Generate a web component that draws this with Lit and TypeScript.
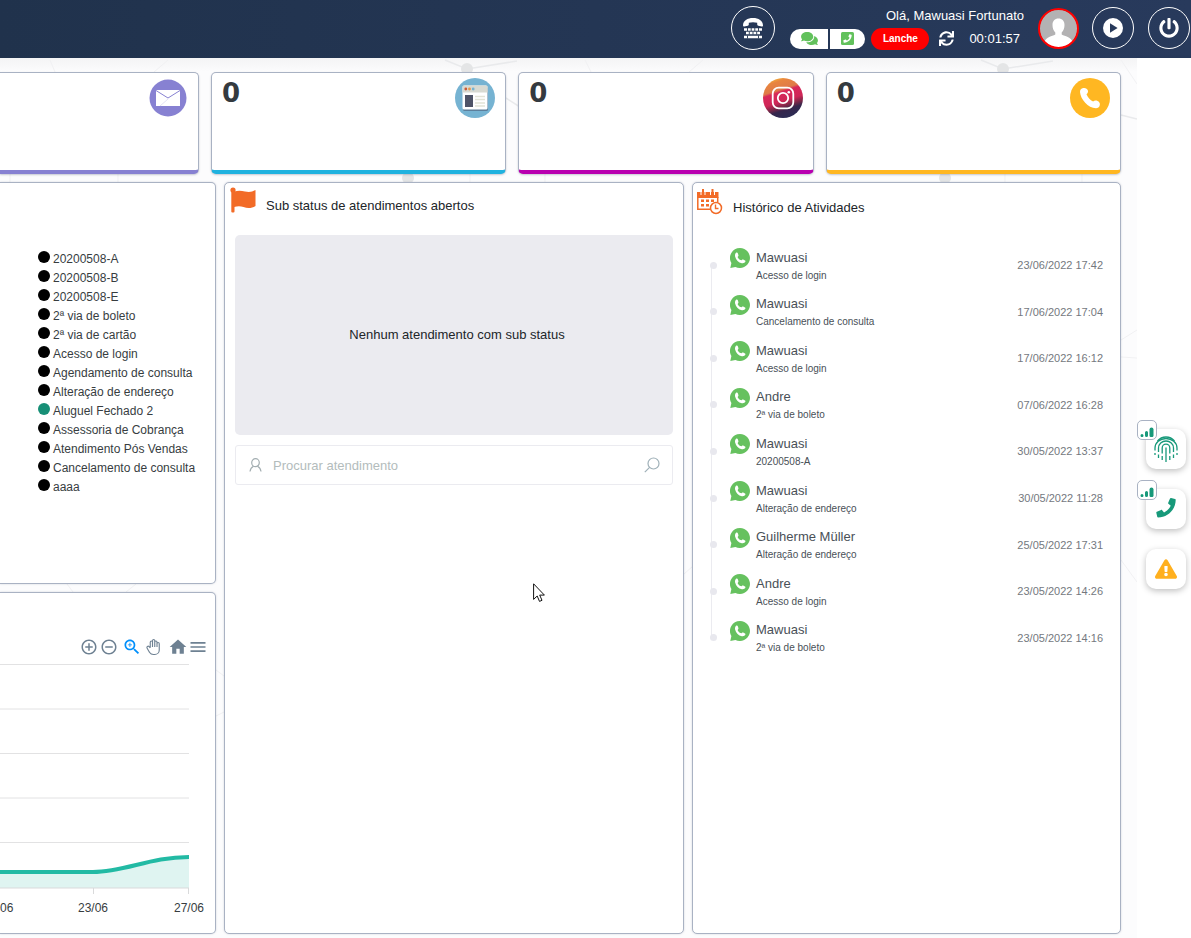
import { LitElement, html, css, svg } from "lit";
import { customElement } from "lit/decorators.js";
import { classMap } from "lit/directives/class-map.js";

const PHONE =
  "M493.4 24.6l-104-24c-11.3-2.6-22.9 3.3-27.5 13.9l-48 112c-4.2 9.8-1.4 21.3 6.9 28l60.6 49.6c-36 76.7-98.9 140.5-177.2 177.2l-49.6-60.6c-6.8-8.3-18.2-11.1-28-6.9l-112 48C3.9 366.5-2 378.1.6 389.4l24 104C27.1 504.2 36.7 512 48 512c256.1 0 464-207.5 464-464 0-11.2-7.7-20.9-18.6-23.4z";
const COMMENTS =
  "M416 192c0-88.4-93.1-160-208-160S0 103.6 0 192c0 34.3 14.1 65.9 38 92-13.4 30.2-35.5 54.2-35.8 54.5-2.2 2.3-2.8 5.7-1.5 8.7S4.8 352 8 352c36.6 0 66.9-12.3 88.7-25 32.2 15.7 70.3 25 111.3 25 114.9 0 208-71.6 208-160zm122 220c23.9-26 38-57.7 38-92 0-66.9-53.5-124.2-129.3-148.1.9 6.6 1.3 13.3 1.3 20.1 0 105.9-107.7 192-240 192-10.8 0-21.3-.8-31.7-1.9C207.8 439.6 281.8 480 368 480c41 0 79.1-9.2 111.3-25 21.8 12.7 52.1 25 88.7 25 3.2 0 6.1-1.9 7.3-4.8 1.3-2.9.7-6.3-1.5-8.7-.3-.3-22.4-24.2-35.8-54.5z";
const SYNC =
  "M440.65 12.57l4 82.77A247.16 247.16 0 0 0 255.83 8C134.73 8 33.91 94.92 12.29 209.82A12 12 0 0 0 24.09 224h49.05a12 12 0 0 0 11.67-9.26 175.91 175.91 0 0 1 317-56.94l-101.46-4.86a12 12 0 0 0-12.57 12v47.41a12 12 0 0 0 12 12H500a12 12 0 0 0 12-12V12a12 12 0 0 0-12-12h-47.37a12 12 0 0 0-11.98 12.57zM255.83 432a175.61 175.61 0 0 1-146-77.8l101.8 4.87a12 12 0 0 0 12.57-12v-47.4a12 12 0 0 0-12-12H12a12 12 0 0 0-12 12V500a12 12 0 0 0 12 12h47.35a12 12 0 0 0 12-12.6l-4.15-82.57A247.17 247.17 0 0 0 255.83 504c121.11 0 221.93-86.92 243.55-201.82a12 12 0 0 0-11.8-14.18h-49.05a12 12 0 0 0-11.67 9.26A175.86 175.86 0 0 1 255.83 432z";
const POWER =
  "M400 54.1c63 45 104 118.6 104 201.9 0 136.8-110.8 247.7-247.5 248C120 504.3 8.2 393 8 256.4 7.9 173.1 48.9 99.3 111.8 54.2c11.7-8.3 28-4.8 35 7.7L162.6 90c5.9 10.5 3.1 23.8-6.6 31-41.5 30.8-68 79.6-68 134.9-.1 92.3 74.5 168.1 168 168.1 91.6 0 168.6-74.2 168-169.1-.3-51.8-24.7-101.8-68.1-134-9.7-7.2-12.4-20.5-6.5-30.9l15.8-28.1c7-12.4 23.2-16.1 34.8-7.8zM296 264V24c0-13.3-10.7-24-24-24h-32c-13.3 0-24 10.7-24 24v240c0 13.3 10.7 24 24 24h32c13.3 0 24-10.7 24-24z";
const WARNING =
  "M569.517 440.013C587.975 472.007 564.806 512 527.94 512H48.054c-36.937 0-59.999-40.055-41.577-71.987L246.423 23.985c18.467-32.009 64.72-31.951 83.154 0l239.94 416.028zM288 354c-25.405 0-46 20.595-46 46s20.595 46 46 46 46-20.595 46-46-20.595-46-46-46zm-43.673-165.346l7.418 136c.347 6.364 5.609 11.346 11.982 11.346h48.546c6.373 0 11.635-4.982 11.982-11.346l7.418-136c.375-6.874-5.098-12.654-11.982-12.654h-63.383c-6.884 0-12.356 5.78-11.981 12.654z";

const mailIcon = html`<svg width="40" height="40" viewBox="0 0 40 40" aria-hidden="true">
  <circle cx="20" cy="20" r="18.5" fill="#8781d2" />
  <rect x="8" y="12" width="24" height="16" fill="#fff" />
  <path d="M8 12.5l12 7.5 12-7.5" fill="none" stroke="#8781d2" stroke-width="1" />
  <path d="M12 28l8-7" stroke="#cfccec" stroke-width=".6" />
</svg>`;

const siteIcon = html`<svg width="40" height="40" viewBox="0 0 40 40" aria-hidden="true">
  <circle cx="20" cy="20" r="20" fill="#76b3d2" />
  <rect x="8" y="9" width="25" height="24" rx="1.5" fill="#5d7f9b" />
  <rect x="7.500" y="7.500" width="25" height="24" rx="1.500" fill="#fff" />
  <path d="M7.500 14.500V9a1.500 1.500 0 0 1 1.500-1.500h22A1.500 1.500 0 0 1 32.500 9v5.500z" fill="#d8dad2" />
  <circle cx="10.800" cy="11" r="1.400" fill="#c95a38" />
  <circle cx="14.500" cy="11" r="1.400" fill="#e6974c" />
  <circle cx="18.200" cy="11" r="1.400" fill="#76b3d2" />
  <rect x="10" y="17" width="8" height="12" fill="#4f5468" />
  <path d="M20 18.500h10M20 21.500h10M20 25h10M20 28h10" stroke="#e2e3d6" stroke-width="1.300" />
</svg>`;

const instaIcon = html`<svg width="40" height="40" viewBox="0 0 40 40" aria-hidden="true">
  <defs>
    <linearGradient id="ig" x1=".3" y1="0" x2=".62" y2="1">
      <stop offset="0" stop-color="#f4b53a" />
      <stop offset=".1" stop-color="#e8853f" />
      <stop offset=".3" stop-color="#df7a48" />
      <stop offset=".36" stop-color="#d8285a" />
      <stop offset=".58" stop-color="#cf2657" />
      <stop offset=".7" stop-color="#7d2748" />
      <stop offset=".8" stop-color="#35264c" />
      <stop offset="1" stop-color="#2b2c55" />
    </linearGradient>
  </defs>
  <circle cx="20" cy="20" r="20" fill="url(#ig)" />
  <rect x="9.700" y="9.700" width="20.600" height="20.600" rx="6" fill="none" stroke="#fff" stroke-width="1.800" />
  <circle cx="20" cy="20" r="5.200" fill="none" stroke="#fff" stroke-width="1.800" />
  <circle cx="25.800" cy="14.200" r="1.300" fill="#fff" />
</svg>`;

const callIcon = html`<svg width="40" height="40" viewBox="0 0 40 40" aria-hidden="true">
  <circle cx="20" cy="20" r="20" fill="#ffb722" />
  <path d="M13.300 10c2.200-.4 4 .6 4.600 2.600.4 1.500-.2 2.800-1.400 3.600 1.300 3.200 3.500 5.600 6.600 7.400 1.200-1.200 2.900-1.400 4.500-.6 2 1 2.700 2.600 2.100 4.400-.5 1.800-1.800 2.800-3.700 2.800C18 30 10.600 21.500 10 14c-.1-2.100 1.200-3.700 3.300-4z" fill="#fff" />
</svg>`;

const whatsapp = html`<svg class="wa" width="20" height="20" viewBox="0 0 20 20" aria-hidden="true">
  <path d="M10 0a10 10 0 1 1-4.600 18.900L.3 20l1.100-4.900A10 10 0 0 1 10 0z" fill="#66c15f" />
  <path d="M6.400 4.600c.6-.3 1.100-.1 1.300.5l.7 2c.2.500 0 .9-.4 1.300-.4.400-.4.800-.1 1.300.8 1.200 1.600 1.900 2.700 2.400.5.200.9.200 1.200-.2.500-.5.900-.6 1.400-.4l1.800.9c.5.300.6.700.4 1.200-.6 1.400-2 1.900-3.600 1.600-3.300-.7-5.800-3.200-6.700-6.800-.3-1.500.1-2.900 1.300-3.800z" fill="#fff" />
</svg>`;

const flagIcon = html`<svg width="26" height="26" viewBox="0 0 26 26" aria-hidden="true">
  <circle cx="3" cy="3" r="2.600" fill="#f26b27" />
  <path d="M1.300 3h3.200v21.500a1 1 0 0 1-1 1h-1.200a1 1 0 0 1-1-1z" fill="#f26b27" />
  <path d="M4 4.500c4-1 7-1 11 0 4 1 7 .5 10.500-1.500v16c-4 2.500-8 2.500-12 1-3.500-1.200-6-1-9.500 0z" fill="#f26b27" />
</svg>`;

const calendarIcon = html`<svg width="26" height="26" viewBox="0 0 26 26" aria-hidden="true">
  <path d="M0 3h21.500v6H0z" fill="#f26b27" />
  <path d="M4 0v6M8 0v6M13.500 0v6M17.500 0v6" stroke="#fff" stroke-width="1" />
  <path d="M6 0v5M15.500 0v5" stroke="#f26b27" stroke-width="2" stroke-linecap="round" />
  <path d="M.8 8v12.200H13M20.700 8v5" fill="none" stroke="#f26b27" stroke-width="1.500" />
  <path d="M4 10.500h3v2.500H4zM9 10.500h3v2.500H9zM14 10.500h3v2.500h-3zM4 15h3v2.500H4zM9 15h3v2.500H9z" fill="#f26b27" />
  <circle cx="19" cy="19" r="5.500" fill="#fff" stroke="#f26b27" stroke-width="1.500" />
  <path d="M18.500 15.500v4h3" fill="none" stroke="#f26b27" stroke-width="1.400" />
</svg>`;

const CHANNELS = [
  { name: "E-mail", tone: "mail", icon: mailIcon, count: "" },
  { name: "Site", tone: "site", icon: siteIcon, count: "0" },
  { name: "Instagram", tone: "insta", icon: instaIcon, count: "0" },
  { name: "Telefone", tone: "call", icon: callIcon, count: "0" },
];

const LEGEND = [
  "20200508-A",
  "20200508-B",
  "20200508-E",
  "2ª via de boleto",
  "2ª via de cartão",
  "Acesso de login",
  "Agendamento de consulta",
  "Alteração de endereço",
  "Aluguel Fechado 2",
  "Assessoria de Cobrança",
  "Atendimento Pós Vendas",
  "Cancelamento de consulta",
  "aaaa",
];

const HISTORY = [
  ["Mawuasi", "Acesso de login", "23/06/2022 17:42"],
  ["Mawuasi", "Cancelamento de consulta", "17/06/2022 17:04"],
  ["Mawuasi", "Acesso de login", "17/06/2022 16:12"],
  ["Andre", "2ª via de boleto", "07/06/2022 16:28"],
  ["Mawuasi", "20200508-A", "30/05/2022 13:37"],
  ["Mawuasi", "Alteração de endereço", "30/05/2022 11:28"],
  ["Guilherme Müller", "Alteração de endereço", "25/05/2022 17:31"],
  ["Andre", "Acesso de login", "23/05/2022 14:26"],
  ["Mawuasi", "2ª via de boleto", "23/05/2022 14:16"],
];

const shared = css`
  * {
    box-sizing: border-box;
  }
  button {
    font: inherit;
    color: inherit;
    background: none;
    border: 0;
    padding: 0;
    margin: 0;
    display: flex;
    align-items: center;
    justify-content: center;
    cursor: pointer;
  }
  svg {
    display: block;
    flex: none;
  }
  ul {
    list-style: none;
    margin: 0;
    padding: 0;
  }
`;

@customElement("top-bar")
class TopBar extends LitElement {
  static styles = [
    shared,
    css`
      :host {
        display: flex;
        align-items: center;
        justify-content: flex-end;
        height: 58px;
        padding: 0 1px 2px 16px;
        color: #fff;
        background: linear-gradient(90deg, #20324c, #283a5c);
      }
      .round {
        width: 42px;
        height: 42px;
        border: 1px solid #fff;
        border-radius: 50%;
      }
      .tty {
        width: 44px;
        height: 44px;
        margin-right: 15px;
      }
      .session {
        display: grid;
        row-gap: 3px;
        margin-right: 14px;
      }
      .hello {
        text-align: right;
        line-height: 18px;
      }
      .controls {
        display: flex;
        align-items: center;
        height: 22px;
        padding-right: 4px;
      }
      .chat,
      .phone {
        width: 38px;
        height: 20px;
        background: #fff;
        border-radius: 10px 0 0 10px;
      }
      .phone {
        width: 35px;
        margin-left: 2px;
        border-radius: 0 10px 10px 0;
      }
      .pause {
        width: 58px;
        height: 22px;
        margin: 0 10px 0 6px;
        border-radius: 11px;
        background: #f00;
        font-size: 10px;
        font-weight: bold;
      }
      .clock {
        margin-left: 15px;
      }
      .avatar {
        width: 41px;
        height: 41px;
        margin-right: 13px;
        border-radius: 50%;
      }
      .play {
        margin-right: 14px;
      }
    `,
  ];
  render() {
    return html`
      <button class="round tty" aria-label="Discador">
        <svg width="20" height="21" viewBox="0 0 20 21">
          <path d="M0 7.500C0 2.500 4.500 0 10 0s10 2.500 10 7.500c0 .8-.4 1.200-1.200 1.100l-3.600-.8c-.7-.2-1-.6-1-1.300V4.800c-2.700-.9-5.700-.9-8.400 0v1.700c0 .7-.3 1.100-1 1.300l-3.600.8C.4 8.700 0 8.300 0 7.500z" fill="#fff" />
          <path d="M1 11.500h18M3 15h14M1 19h18" stroke="#fff" stroke-width="2.600" />
          <path d="M4.500 10v3M8.200 10v3M11.800 10v3M15.500 10v3M6.300 13.500v3M10 13.500v3M13.700 13.500v3M4.500 17.500v3M15.500 17.500v3" stroke="#23354f" stroke-width=".9" />
        </svg>
      </button>
      <div class="session">
        <div class="hello">Olá, Mawuasi Fortunato</div>
        <div class="controls">
          <button class="chat" aria-label="Mensagens">
            <svg width="17" height="15" viewBox="0 0 576 512"><path d=${COMMENTS} fill="#62c15c" /></svg>
          </button>
          <button class="phone" aria-label="Telefone">
            <svg width="13" height="13" viewBox="0 0 13 13">
              <rect width="13" height="13" rx="1.500" fill="#62c15c" />
              <path d=${PHONE} fill="#fff" transform="translate(2.300 2.300) scale(.0164)" />
            </svg>
          </button>
          <button class="pause">Lanche</button>
          <button aria-label="Atualizar">
            <svg width="15" height="15" viewBox="0 0 512 512"><path d=${SYNC} fill="#fff" /></svg>
          </button>
          <span class="clock">00:01:57</span>
        </div>
      </div>
      <button class="avatar" aria-label="Perfil">
        <svg width="41" height="41" viewBox="0 0 41 41">
          <clipPath id="face"><circle cx="20.500" cy="20.500" r="19" /></clipPath>
          <circle cx="20.500" cy="20.500" r="19" fill="#b3b2b3" />
          <g clip-path="url(#face)" fill="#fff">
            <path d="M20.500 10.500c3.700 0 6 2.600 6 6.500 0 3.200-1 6-2.800 7.400v2.200c1.300 1.200 9.800 2 11.300 8.400V42H6v-7c1.500-6.400 10-7.200 11.300-8.400v-2.200c-1.800-1.400-2.800-4.200-2.800-7.400 0-3.900 2.300-6.500 6-6.500z" />
          </g>
          <circle cx="20.500" cy="20.500" r="19.500" fill="none" stroke="#f00" stroke-width="2" />
        </svg>
      </button>
      <button class="round play" aria-label="Iniciar">
        <svg width="20" height="20" viewBox="0 0 20 20">
          <circle cx="10" cy="10" r="10" fill="#fff" />
          <path d="M7 5.300l7.600 4.700L7 14.700z" fill="#27395a" />
        </svg>
      </button>
      <button class="round" aria-label="Sair">
        <svg width="20" height="20" viewBox="0 0 512 512"><path d=${POWER} fill="#fff" /></svg>
      </button>
    `;
  }
}

@customElement("area-chart")
class AreaChart extends LitElement {
  static styles = [
    shared,
    css`
      :host {
        display: block;
        padding: 45px 7px 17px 0;
      }
      .tools {
        display: flex;
        align-items: center;
        justify-content: flex-end;
        height: 18px;
        color: #6e8192;
      }
      .tools button {
        margin-left: 2px;
      }
      .tools .gap {
        margin-left: 4px;
      }
      .tools .menu {
        margin-left: 0;
      }
      .plot {
        margin-top: 4px;
        font-size: 12px;
      }
    `,
  ];
  render() {
    return html`
      <div class="tools">
        <button aria-label="Aproximar">
          <svg width="18" height="18" viewBox="0 0 24 24">
            <path fill="currentColor" d="M13 7h-2v4H7v2h4v4h2v-4h4v-2h-4V7zm-1-5C6.480 2 2 6.480 2 12s4.480 10 10 10 10-4.480 10-10S17.520 2 12 2zm0 18c-4.410 0-8-3.590-8-8s3.590-8 8-8 8 3.590 8 8-3.590 8-8 8z" />
          </svg>
        </button>
        <button aria-label="Afastar">
          <svg width="18" height="18" viewBox="0 0 24 24">
            <path fill="currentColor" d="M7 11v2h10v-2H7zm5-9C6.480 2 2 6.480 2 12s4.480 10 10 10 10-4.480 10-10S17.520 2 12 2zm0 18c-4.410 0-8-3.590-8-8s3.590-8 8-8 8 3.590 8 8-3.590 8-8 8z" />
          </svg>
        </button>
        <button class="gap" aria-label="Selecionar zoom">
          <svg width="20" height="20" viewBox="0 0 24 24" fill="#008ffb">
            <path d="M15.500 14h-.79l-.28-.27C15.410 12.590 16 11.110 16 9.500 16 5.910 13.090 3 9.500 3S3 5.910 3 9.500 5.910 16 9.500 16c1.610 0 3.090-.59 4.230-1.570l.27.28v.79l5 4.990L20.490 19l-4.990-5zm-6 0C7.010 14 5 11.990 5 9.500S7.010 5 9.500 5 14 7.010 14 9.500 11.990 14 9.500 14z" />
            <path d="M12 10h-2v2H9v-2H7V9h2V7h1v2h2v1z" />
          </svg>
        </button>
        <button aria-label="Mover">
          <svg width="20" height="18" viewBox="0 0 26 24" fill="none" stroke="currentColor" stroke-width="1.500">
            <path d="M8 13V5.500a1.500 1.500 0 0 1 3 0V12M11 5.500v-2a1.500 1.500 0 1 1 3 0V12M14 5.500a1.500 1.500 0 0 1 3 0V12M17 7.500a1.500 1.500 0 0 1 3 0V16a6 6 0 0 1-6 6h-1.800a6 6 0 0 1-5.010-2.700L7 19c-.31-.48-1.400-2.390-3.290-5.730a1.500 1.500 0 0 1 .54-2.020 1.870 1.870 0 0 1 2.280.28L8 13" />
          </svg>
        </button>
        <button class="gap" aria-label="Restaurar">
          <svg width="20" height="20" viewBox="0 0 24 24"><path fill="currentColor" d="M10 20v-6h4v6h5v-8h3L12 3 2 12h3v8z" /></svg>
        </button>
        <button class="menu" aria-label="Menu">
          <svg width="20" height="20" viewBox="0 0 24 24"><path fill="currentColor" d="M3 18h18v-2H3v2zm0-5h18v-2H3v2zm0-7v2h18V6H3z" /></svg>
        </button>
      </div>
      <svg class="plot" width="206" height="256" viewBox="0 0 206 256" role="img" aria-label="Atendimentos por dia">
        ${[4.5, 49, 93.5, 138, 182.5].map((y) => svg`<path d="M0 ${y}H189" stroke="#e2e2e3" />`)}
        <path d="M0 212H93C125 212 150 197 189 197V228H0z" fill="#dff4f1" />
        <path d="M0 228H189M93.500 228v6M188.500 228v6" stroke="#d9dadb" fill="none" />
        <path d="M0 212H93C125 212 150 197 189 197" fill="none" stroke="#22baa4" stroke-width="4" />
        <g fill="#373d3f" text-anchor="middle">
          <text x="0" y="252" text-anchor="start">06</text>
          <text x="93" y="252">23/06</text>
          <text x="189" y="252">27/06</text>
        </g>
      </svg>
    `;
  }
}

@customElement("side-rail")
class SideRail extends LitElement {
  static styles = [
    shared,
    css`
      :host {
        display: flex;
        flex-direction: column;
        align-items: center;
        justify-content: center;
        gap: 20px;
        width: 54px;
        padding: 22px 0 0 4px;
        background: #fff;
        box-shadow: 0 0 3px rgba(0, 0, 0, 0.08);
      }
      .tile {
        position: relative;
        width: 40px;
        height: 40px;
        border-radius: 10px;
        background: #fff;
        box-shadow: 0 2px 6px rgba(0, 0, 0, 0.25);
      }
      .badge {
        position: absolute;
        left: -9px;
        top: -9px;
        width: 20px;
        height: 20px;
        display: flex;
        align-items: flex-end;
        justify-content: center;
        padding-bottom: 2px;
        border: 1px solid #a9b2c3;
        border-radius: 5px;
        background: #fff;
      }
    `,
  ];
  private signal() {
    return html`<span class="badge">
      <svg width="14" height="10" viewBox="0 0 14 10" stroke="#17997a" stroke-linecap="round" aria-hidden="true">
        <path d="M2 8.500v.1M6.500 5.500v2.900" stroke-width="3" />
        <path d="M11.500 2.500v5.700" stroke-width="4" />
      </svg>
    </span>`;
  }
  render() {
    return html`
      <button class="tile" aria-label="Biometria">
        ${this.signal()}
        <svg width="24" height="28" viewBox="0 0 24 28" fill="none" stroke="#17997a" stroke-width="1.300">
          <path d="M3.500 6a11 11 0 0 1 17 0" />
          <path d="M1 20v-2M1 15.500V13a11 9.500 0 0 1 22 0v2.500M23 18v2" />
          <path d="M4.500 23v-3.500M4.500 17v-4a7.500 7 0 0 1 15 0v4M19.500 19.500V23" />
          <path d="M8.200 25v-4M8.200 18.500V13a3.800 3.800 0 0 1 7.600 0v5.500M15.800 21v4" />
          <path d="M12 12.500V27" />
        </svg>
      </button>
      <button class="tile" aria-label="Ligar">
        ${this.signal()}
        <svg width="20" height="22" viewBox="0 0 512 580"><path d=${PHONE} fill="#17997a" /></svg>
      </button>
      <button class="tile" aria-label="Alertas">
        <svg width="22" height="20" viewBox="0 0 576 512"><path d=${WARNING} fill="#ffb01f" /></svg>
      </button>
    `;
  }
}

@customElement("app-root")
class AppRoot extends LitElement {
  static styles = [
    shared,
    css`
      :host {
        position: relative;
        display: flex;
        flex-direction: column;
        min-height: 100vh;
        overflow: hidden;
        font-family: "Liberation Sans", Arial, sans-serif;
        font-size: 13px;
        color: #212529;
        background: #fcfcfd;
      }
      .body {
        flex: 1;
        display: flex;
      }
      .main {
        position: relative;
        flex: 1;
        min-width: 0;
        display: flex;
        flex-direction: column;
        gap: 8px;
        padding: 14px 16px 4px 0;
        background: linear-gradient(#f4f4f5, #fcfcfd 14px);
      }
      .mesh {
        position: absolute;
        inset: 0;
        width: 100%;
        height: 100%;
      }
      .channels {
        position: relative;
        display: grid;
        grid-template-columns: 199px repeat(3, 1fr);
        gap: 12px;
      }
      .card {
        display: flex;
        justify-content: space-between;
        align-items: flex-start;
        height: 102px;
        padding: 5px 10px 0 10px;
        border: 1px solid #a9b2c3;
        border-radius: 5px;
        border-bottom-width: 4px;
        background: #fff;
        box-shadow: 0 1px 2px rgba(70, 80, 110, 0.3);
      }
      .card.mail {
        justify-content: flex-end;
        border-left: 0;
        border-radius: 0 5px 5px 0;
        border-bottom-color: #8781d2;
      }
      .card.site {
        border-bottom-color: #20b2df;
      }
      .card.insta {
        border-bottom-color: #b900b0;
      }
      .card.call {
        border-bottom-color: #ffb722;
      }
      .count {
        font: bold 26px/30px "DejaVu Sans", sans-serif;
        color: #343a40;
      }
      .panels {
        position: relative;
        flex: 1;
        display: grid;
        grid-template-columns: 216px minmax(0, 460fr) minmax(0, 429fr);
        gap: 8px;
      }
      .stack {
        display: grid;
        grid-template-rows: 1fr auto;
        gap: 8px;
      }
      .panel {
        border: 1px solid #a9b2c3;
        border-radius: 5px;
        background: #fff;
        box-shadow: 0 0 2px rgba(70, 80, 110, 0.25);
      }
      .cut {
        border-left: 0;
        border-radius: 0 5px 5px 0;
      }
      .legend {
        padding: 67px 0 0 38px;
        font-size: 12px;
        line-height: 19px;
        color: #373d3f;
      }
      .legend li {
        display: flex;
        gap: 3px;
        white-space: nowrap;
      }
      .dot {
        width: 12px;
        height: 12px;
        margin-top: 1px;
        border-radius: 50%;
        background: #000;
      }
      .dot.active {
        background: #178f76;
      }
      .title {
        display: flex;
        align-items: flex-start;
        gap: 10px;
        margin: 0;
        padding: 4px 0 0 5px;
        font-size: 13px;
        font-weight: normal;
        line-height: 38px;
      }
      .history .title {
        padding: 6px 0 0 4px;
      }
      .empty {
        display: flex;
        align-items: center;
        justify-content: center;
        height: 200px;
        margin: 10px;
        padding: 0 0 2px 6px;
        border-radius: 5px;
        background: #ebebf0;
      }
      .search {
        display: flex;
        align-items: center;
        gap: 10px;
        height: 40px;
        margin: 0 10px;
        padding: 0 12px;
        border: 1px solid #ebebf0;
        border-radius: 3px;
      }
      .search input {
        flex: 1;
        min-width: 0;
        padding: 0;
        border: 0;
        outline: 0;
        background: none;
        font: inherit;
        color: #212529;
      }
      .search input::placeholder {
        color: #b3bcbc;
        opacity: 1;
      }
      .events {
        display: grid;
        grid-auto-rows: 1fr;
        height: 419px;
        margin-top: 15px;
        padding: 0 17px;
      }
      .event {
        position: relative;
        display: flex;
        align-items: center;
      }
      .event::before {
        content: "";
        position: absolute;
        left: 1px;
        top: 50%;
        width: 1px;
        height: 100%;
        background: #ebebf0;
      }
      .event:last-child::before {
        display: none;
      }
      .node {
        position: relative;
        width: 7px;
        height: 7px;
        border-radius: 50%;
        background: #e8e8ee;
      }
      .wa {
        margin: 0 6px 14px 13px;
      }
      .who {
        flex: 1;
        padding-top: 3px;
        line-height: 18px;
        color: #495057;
      }
      .why {
        font-size: 10px;
      }
      .when {
        font-size: 11px;
        color: #74787e;
      }
      .pointer {
        position: absolute;
        left: 533px;
        top: 583px;
      }
    `,
  ];

  render() {
    return html`
      <top-bar></top-bar>
      <div class="body">
        <main class="main">
          <svg class="mesh" viewBox="0 58 1137 880" preserveAspectRatio="xMaxYMin slice" aria-hidden="true">
            <g fill="none" stroke="#e9eaec" stroke-width="1.500">
              <path d="M445 60l22 9 50-8M981 60l22 9 50-8M506 98l14 9M1121 115l16 4" />
            </g>
            <g fill="none" stroke="#f1f1f3">
              <path d="M50 60l5 12M168 60l-14 12M585 60l6 12M703 60l-14 12M1121 60l16 24" />
              <path d="M10 174v8M118 174v8M470 174v8M545 174v8M1005 174v8M1082 174v8M67 584l6 8M136 584l-10 8M684 574l9-8M1121 340l16-10M1121 357l16 1M1121 560l16 22M216 670l8 6M216 716l8-4" />
            </g>
            <g fill="#e4e5e6">
              <circle cx="467" cy="69" r="6" />
              <circle cx="1003" cy="69" r="6" />
              <circle cx="408" cy="178" r="6" />
              <circle cx="945" cy="178" r="6" />
            </g>
          </svg>
          <section class="channels">
            ${CHANNELS.map(
              (c) => html`<article class="card ${c.tone}" aria-label=${c.name}>
                ${c.count ? html`<span class="count">${c.count}</span>` : null} ${c.icon}
              </article>`
            )}
          </section>
          <section class="panels">
            <div class="stack">
              <section class="panel cut">
                <ul class="legend">
                  ${LEGEND.map(
                    (label) => html`<li>
                      <span class=${classMap({ dot: true, active: label === "Aluguel Fechado 2" })}></span>${label}
                    </li>`
                  )}
                </ul>
              </section>
              <section class="panel cut"><area-chart></area-chart></section>
            </div>
            <section class="panel">
              <h2 class="title">${flagIcon}Sub status de atendimentos abertos</h2>
              <div class="empty">Nenhum atendimento com sub status</div>
              <label class="search">
                <svg width="15" height="14" viewBox="0 0 15 14" fill="none" stroke="#a3aeb1" stroke-width="1.200">
                  <ellipse cx="7.500" cy="4.700" rx="3.800" ry="4" />
                  <path d="M2 13.500c.3-3 1.500-4.300 3.500-5.300M13 13.500c-.3-3-1.500-4.300-3.500-5.300" />
                </svg>
                <input type="text" placeholder="Procurar atendimento" aria-label="Procurar atendimento" />
                <svg width="16" height="16" viewBox="0 0 16 16" fill="none" stroke="#9fb0b8" stroke-width="1.200">
                  <circle cx="9.500" cy="6.500" r="5.500" />
                  <path d="M5.600 10.400L.8 15.200" />
                </svg>
              </label>
            </section>
            <section class="panel history">
              <h2 class="title">${calendarIcon}Histórico de Atividades</h2>
              <ul class="events">
                ${HISTORY.map(
                  ([who, why, when]) => html`<li class="event">
                    <span class="node"></span>
                    ${whatsapp}
                    <div class="who">
                      <div>${who}</div>
                      <div class="why">${why}</div>
                    </div>
                    <time class="when">${when}</time>
                  </li>`
                )}
              </ul>
            </section>
          </section>
        </main>
        <side-rail></side-rail>
      </div>
      <svg class="pointer" width="12" height="20" viewBox="0 0 12 20" aria-hidden="true">
        <path d="M.6.8v15.600l3.600-3.400 2.300 5.400 2.500-1.100-2.300-5.200h4.700z" fill="#fff" stroke="#111" />
      </svg>
    `;
  }
}
